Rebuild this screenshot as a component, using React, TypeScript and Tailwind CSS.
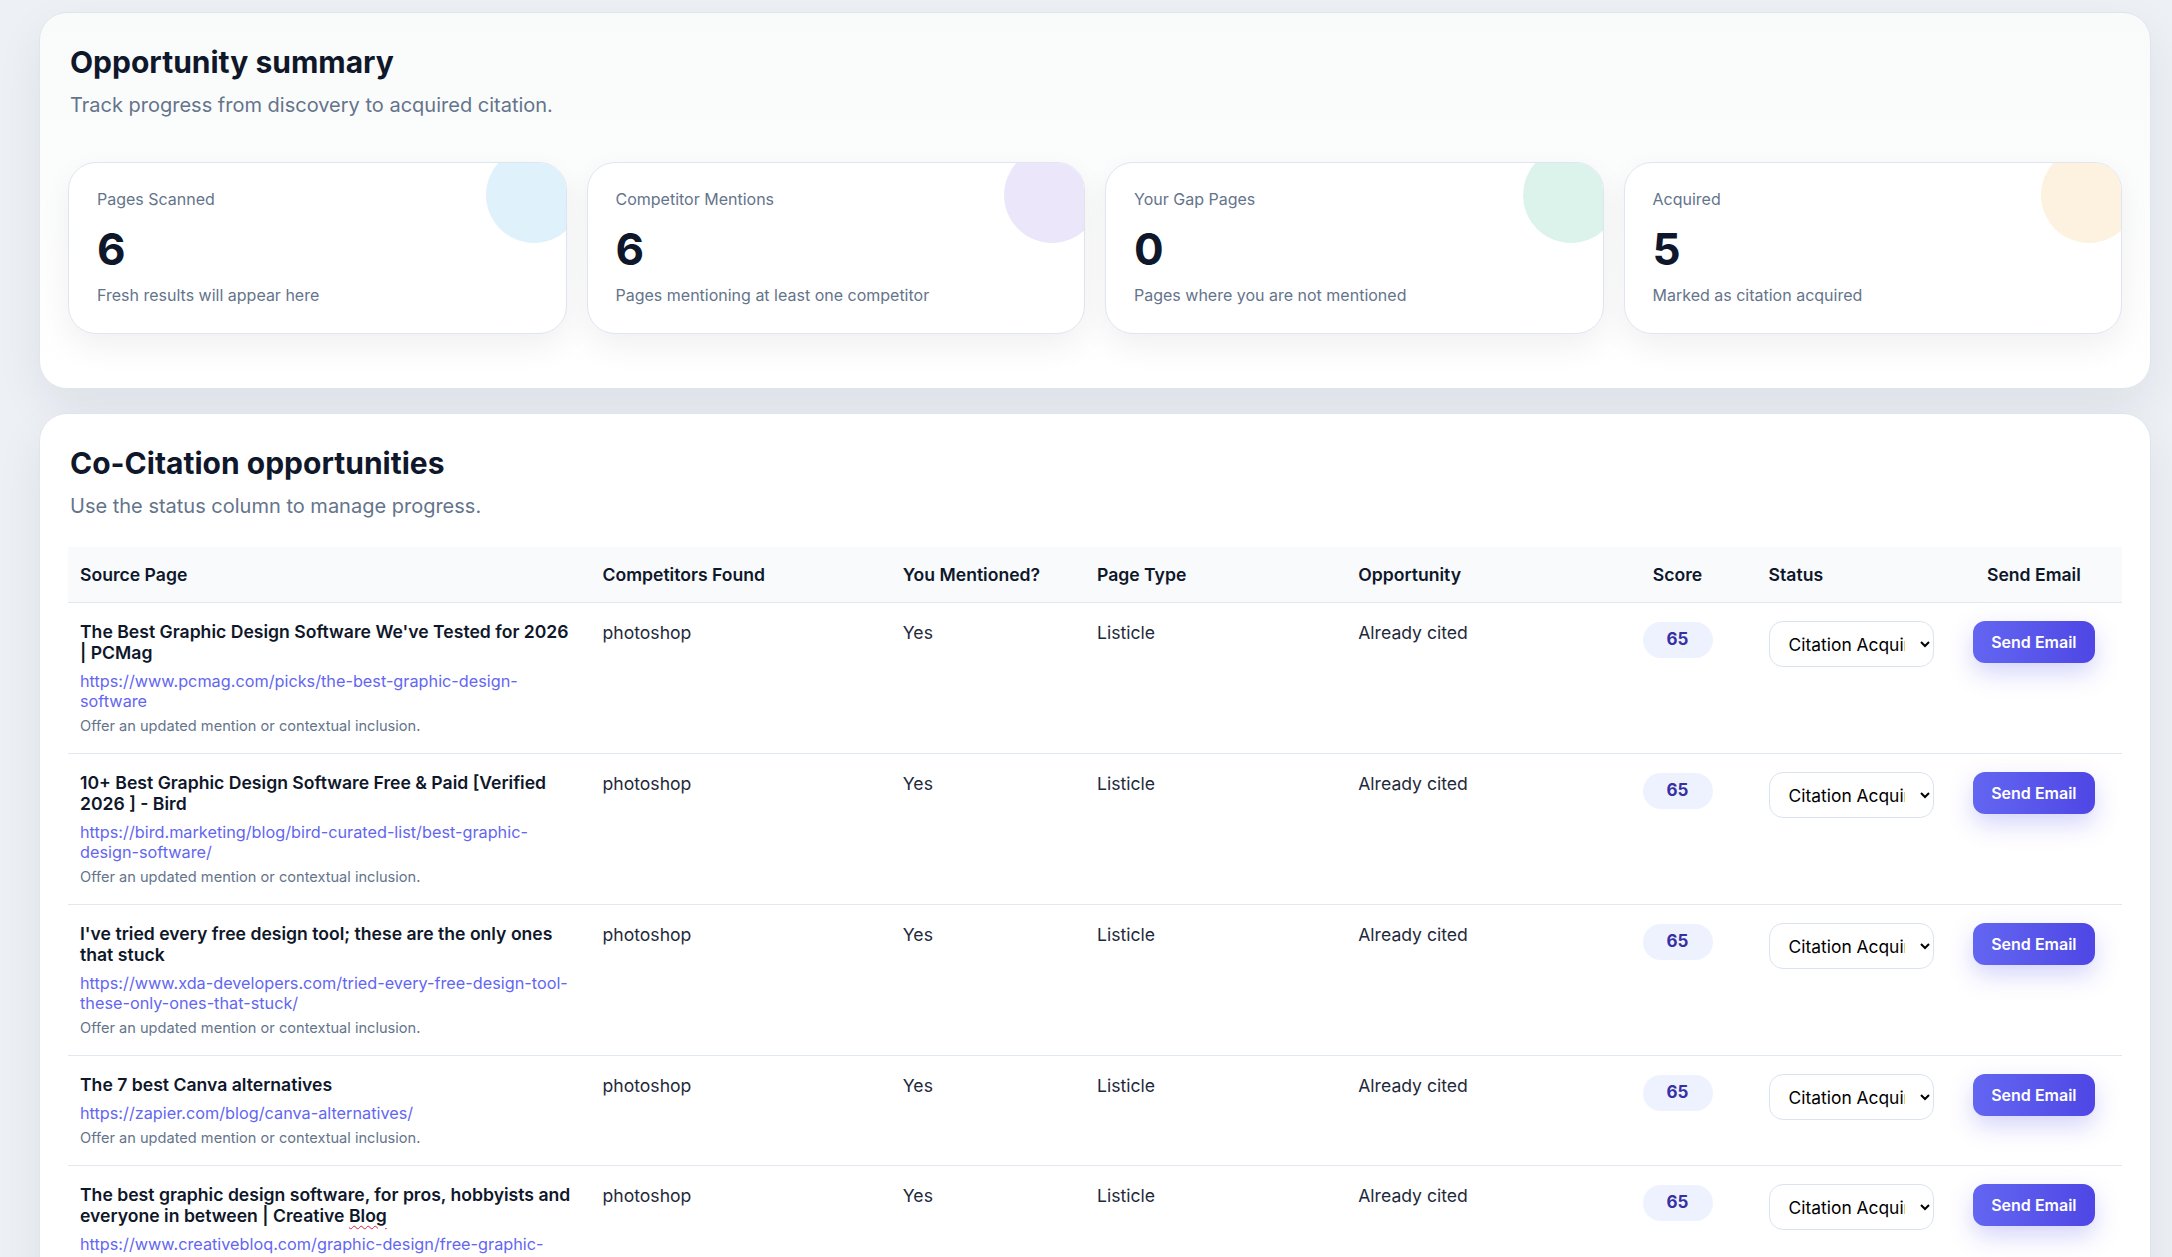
import React from "react";

const stats = [
  { label: "Pages Scanned", value: "6", desc: "Fresh results will appear here", circle: "bg-[#dff1fa]" },
  { label: "Competitor Mentions", value: "6", desc: "Pages mentioning at least one competitor", circle: "bg-[#ece6fb]" },
  { label: "Your Gap Pages", value: "0", desc: "Pages where you are not mentioned", circle: "bg-[#dcf3ec]" },
  { label: "Acquired", value: "5", desc: "Marked as citation acquired", circle: "bg-[#fcf2df]" },
];

type Row = { title: React.ReactNode; url: string };

const rows: Row[] = [
  {
    title: "The Best Graphic Design Software We've Tested for 2026 | PCMag",
    url: "https://www.pcmag.com/picks/the-best-graphic-design-software",
  },
  {
    title: "10+ Best Graphic Design Software Free & Paid [Verified 2026 ] - Bird",
    url: "https://bird.marketing/blog/bird-curated-list/best-graphic-design-software/",
  },
  {
    title: "I've tried every free design tool; these are the only ones that stuck",
    url: "https://www.xda-developers.com/tried-every-free-design-tool-these-only-ones-that-stuck/",
  },
  {
    title: "The 7 best Canva alternatives",
    url: "https://zapier.com/blog/canva-alternatives/",
  },
  {
    title: (
      <>
        The best graphic design software, for pros, hobbyists and everyone in between | Creative{" "}
        <span className="underline decoration-wavy decoration-[#e11d48] decoration-1 underline-offset-[3px]">Blog</span>
      </>
    ),
    url: "https://www.creativebloq.com/graphic-design/free-graphic-design-software",
  },
];

const cols = [522, 300, 194, 261, 252, 158, 189, 176];

const th = "px-3 py-[15px] text-[17.6px] leading-[25px] font-semibold text-[#0f172a]";
const td = "px-3 pt-[18px] align-top text-[17.6px] leading-6 text-[#1e293b]";

export default function App() {
  return (
    <div className="min-h-screen bg-[#edf0f5] pl-[39px] pr-[21px] pt-[12px] pb-10 [font-family:Inter,'Noto_Sans',sans-serif]">
      <section className="rounded-[28px] border border-[#dfe5ef] bg-linear-to-b from-[#f9fafa] to-white px-[28px] pt-[31px] pb-[54px] shadow-[0_18px_48px_rgba(15,23,42,0.07)]">
        <div className="pl-[2px]">
          <h2 className="text-[30px] leading-9 font-bold text-[#0f172a]">Opportunity summary</h2>
          <p className="mt-[11px] text-xl leading-7 text-[#64748b]">Track progress from discovery to acquired citation.</p>
        </div>
        <div className="mt-[43px] grid grid-cols-4 gap-5">
          {stats.map((s) => (
            <div
              key={s.label}
              className="relative overflow-hidden rounded-[28px] border border-[#dfe6f2] bg-white px-7 pt-6 pb-[26px] shadow-[0_12px_32px_rgba(15,23,42,0.06)]"
            >
              <div className={`absolute -right-4 -top-4 h-24 w-24 rounded-full ${s.circle}`} />
              <div className="relative text-base leading-6 text-[#64748b]">{s.label}</div>
              <div className="relative mt-4 text-[44px] leading-[44px] font-bold text-[#0f172a]">{s.value}</div>
              <div className="relative mt-3 text-base leading-6 text-[#64748b]">{s.desc}</div>
            </div>
          ))}
        </div>
      </section>

      <section className="mt-6 rounded-[28px] border border-[#dfe5ef] bg-white px-[28px] pt-[31px] pb-8 shadow-[0_18px_48px_rgba(15,23,42,0.07)]">
        <div className="pl-[2px]">
          <h2 className="text-[30px] leading-9 font-bold text-[#0f172a]">Co-Citation opportunities</h2>
          <p className="mt-[11px] text-xl leading-7 text-[#64748b]">Use the status column to manage progress.</p>
        </div>
        <table className="mt-[27px] w-full table-fixed border-collapse">
          <colgroup>
            {cols.map((w, i) => (
              <col key={i} style={{ width: w }} />
            ))}
          </colgroup>
          <thead>
            <tr className="border-b border-[#e2e8f0] bg-[#f8fafc]">
              <th className={`${th} text-left`}>Source Page</th>
              <th className={`${th} text-left`}>Competitors Found</th>
              <th className={`${th} text-left`}>You Mentioned?</th>
              <th className={`${th} text-left`}>Page Type</th>
              <th className={`${th} text-left`}>Opportunity</th>
              <th className={`${th} text-center`}>Score</th>
              <th className={`${th} text-left`}>Status</th>
              <th className={`${th} text-center`}>Send Email</th>
            </tr>
          </thead>
          <tbody>
            {rows.map((r, i) => (
              <tr key={i} className="border-b border-[#e2e8f0]">
                <td className="px-3 pt-[18px] pb-[18px] align-top">
                  <div className="text-[17.6px] leading-[21px] font-semibold text-[#0f172a]">{r.title}</div>
                  <div className="mt-2 text-[16.25px] leading-5 text-[#6366f1] break-words">{r.url}</div>
                  <div className="mt-1.5 text-[14.6px] leading-[18px] text-[#64748b]">Offer an updated mention or contextual inclusion.</div>
                </td>
                <td className={td}>photoshop</td>
                <td className={td}>Yes</td>
                <td className={td}>Listicle</td>
                <td className={td}>Already cited</td>
                <td className="px-3 pt-[19px] align-top text-center">
                  <span className="inline-flex h-9 w-[70px] items-center justify-center rounded-full bg-[#eef2ff] text-[17px] font-bold text-[#3730a3]">
                    65
                  </span>
                </td>
                <td className="px-3 pt-[18px] align-top">
                  <select
                    defaultValue="acquired"
                    className="h-[46px] w-[165px] rounded-[14px] border border-[#dbe3ef] bg-white pl-[15px] pr-3 text-[17.4px] text-black"
                  >
                    <option value="new">New</option>
                    <option value="contacted">Contacted</option>
                    <option value="acquired">Citation Acquired</option>
                  </select>
                </td>
                <td className="px-3 pt-[18px] align-top text-center">
                  <button className="h-[42px] w-[122px] rounded-xl bg-linear-to-r from-[#6366f1] to-[#4f46e5] text-base font-semibold text-white shadow-[0_10px_24px_rgba(99,102,241,0.28)]">
                    Send Email
                  </button>
                </td>
              </tr>
            ))}
          </tbody>
        </table>
      </section>
    </div>
  );
}
